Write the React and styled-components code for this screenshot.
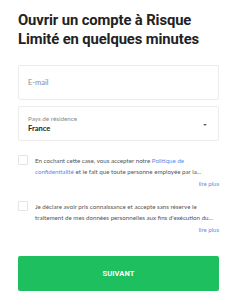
import React from 'react'
import styled, { createGlobalStyle } from 'styled-components'

const Global = createGlobalStyle`
  html, body { margin: 0; padding: 0; background: #fff; }
  body { font-family: 'Lato', 'Open Sans', sans-serif; }
`

const Page = styled.div`
  width: 251px;
  height: 300px;
  box-sizing: border-box;
  padding: 11px 32px 0 18px;
  display: flex;
  flex-direction: column;
`

const Title = styled.h1`
  margin: 0;
  font-family: 'Roboto', sans-serif;
  font-weight: 700;
  font-size: 14.8px;
  line-height: 19px;
  color: #222;
  letter-spacing: -0.1px;
`

const Field = styled.div`
  margin-top: ${p => p.$top}px;
  height: 35px;
  box-sizing: border-box;
  border: 1px solid #ececec;
  border-radius: 2px;
  padding: 0 9px;
  display: flex;
  align-items: center;
  position: relative;
`

const Placeholder = styled.span`
  font-size: 7.5px;
  color: #8a8a8a;
`

const SelectBody = styled.div`
  display: flex;
  flex-direction: column;
  gap: 2px;
`

const SmallLabel = styled.span`
  font-size: 6.3px;
  color: #8a8a8a;
`

const Value = styled.span`
  font-size: 7.5px;
  font-weight: 700;
  color: #222;
`

const Caret = styled.span`
  position: absolute;
  right: 11px;
  top: 50%;
  width: 0;
  height: 0;
  border-left: 2px solid transparent;
  border-right: 2px solid transparent;
  border-top: 2.5px solid #666;
`

const Consent = styled.div`
  margin-top: ${p => p.$top}px;
  display: flex;
  flex-direction: column;
`

const ConsentRow = styled.div`
  display: flex;
  gap: 7px;
  align-items: flex-start;
`

const Box = styled.span`
  flex: none;
  width: 10px;
  height: 10px;
  border: 1px solid #e4e4e4;
  border-radius: 1px;
  box-sizing: border-box;
`

const Text = styled.p`
  margin: 0;
  padding-right: 6px;
  font-size: 6.2px;
  line-height: 11px;
  color: #555;
`

const Link = styled.a`
  color: #5b8be8;
  text-decoration: none;
`

const More = styled.a`
  align-self: flex-end;
  margin-top: 3px;
  font-size: 6px;
  color: #5b8be8;
  text-decoration: none;
`

const Button = styled.button`
  margin-top: 23px;
  height: 35px;
  border: 0;
  border-radius: 2px;
  background: #1dbf5e;
  color: #fff;
  font-family: 'Roboto', sans-serif;
  font-weight: 700;
  font-size: 7.5px;
  letter-spacing: 0.1px;
`

export default function App() {
  return (
    <Page>
      <Global />
      <Title>Ouvrir un compte à Risque Limité en quelques minutes</Title>
      <Field $top={16}>
        <Placeholder>E-mail</Placeholder>
      </Field>
      <Field $top={6}>
        <SelectBody>
          <SmallLabel>Pays de résidence</SmallLabel>
          <Value>France</Value>
        </SelectBody>
        <Caret />
      </Field>
      <Consent $top={14}>
        <ConsentRow>
          <Box />
          <Text>
            En cochant cette case, vous accepter notre <Link href="#">Politique de confidentialité</Link> et le fait que toute personne employée par la...
          </Text>
        </ConsentRow>
        <More href="#">lire plus</More>
      </Consent>
      <Consent $top={14}>
        <ConsentRow>
          <Box />
          <Text>
            Je déclare avoir pris connaissance et accepte sans réserve le traitement de mes données personnelles aux fins d'exécution du...
          </Text>
        </ConsentRow>
        <More href="#">lire plus</More>
      </Consent>
      <Button>SUIVANT</Button>
    </Page>
  )
}
